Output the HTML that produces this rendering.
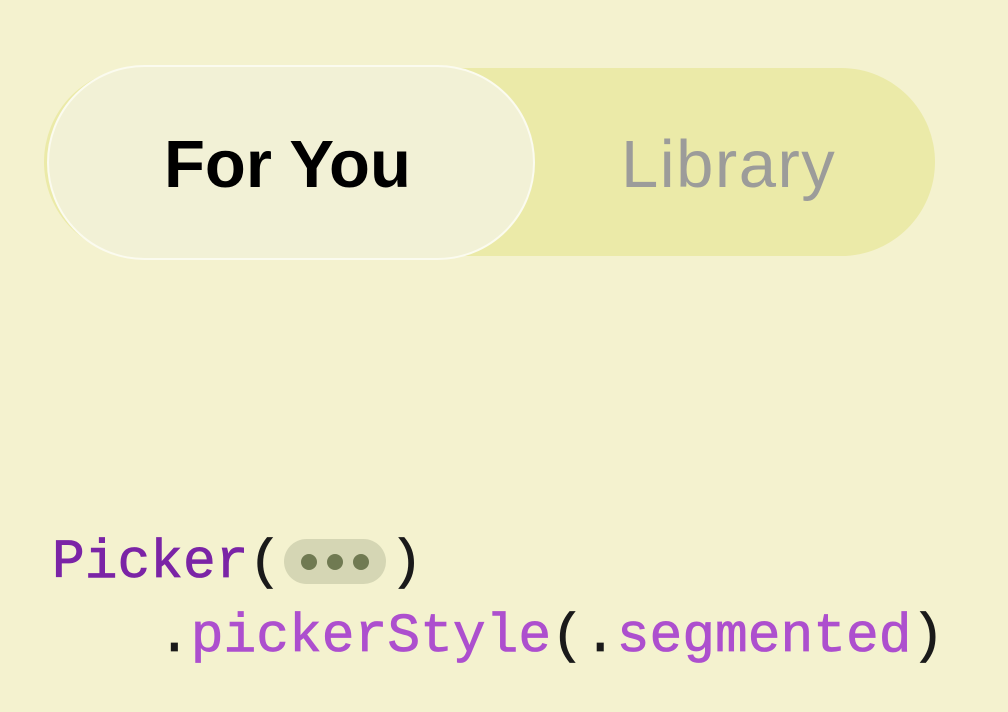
<!DOCTYPE html>
<html><head><style>
html,body{margin:0;padding:0}
body{width:1008px;height:712px;background:#f4f2cf;position:relative;overflow:hidden;font-family:"Liberation Sans",sans-serif}
.outer{position:absolute;left:44px;top:68px;width:891px;height:188px;border-radius:94px;background:#ebeaa8}
.sel{position:absolute;left:47px;top:65px;width:488px;height:195px;border-radius:98px;background:#f2f1d6;border:2px solid #fbfbef;box-sizing:border-box}
.t{position:absolute;top:125px;font-size:67px;line-height:80px}
.code{position:absolute;font-family:"Liberation Mono",monospace;font-size:54.6px;line-height:60px;white-space:pre;-webkit-text-stroke:0.8px currentColor}
.pill{position:absolute;left:284px;top:539px;width:102px;height:45px;border-radius:23px;background:#d5d6b4}
.dot{position:absolute;top:15px;width:16px;height:16px;border-radius:50%;background:#707a52}
</style></head><body>
<div class="outer"></div>
<div class="sel"></div>
<div class="t" style="left:164px;color:#000;font-weight:bold">For You</div>
<div class="t" style="left:621px;color:#9c9c9a;letter-spacing:1.5px">Library</div>
<div class="code" style="left:52px;top:534px"><span style="color:#7b24a6">Picker</span><span style="color:#1a1a1a">(</span></div>
<div class="pill"><div class="dot" style="left:17px"></div><div class="dot" style="left:43px"></div><div class="dot" style="left:69px"></div></div>
<div class="code" style="left:390px;top:534px;color:#1a1a1a">)</div>
<div class="code" style="left:158px;top:608px"><span style="color:#1a1a1a">.</span><span style="color:#ad4fce">pickerStyle</span><span style="color:#1a1a1a">(.</span><span style="color:#ad4fce">segmented</span><span style="color:#1a1a1a">)</span></div>
</body></html>
